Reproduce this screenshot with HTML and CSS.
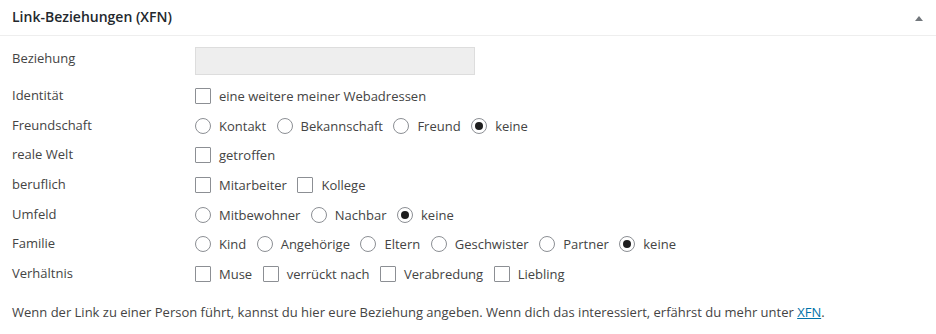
FILE: index.html
```html
<!DOCTYPE html>
<html lang="de">
<head>
<meta charset="utf-8">
<title>Link-Beziehungen (XFN)</title>
<link rel="stylesheet" href="styles.css">
</head>
<body>
<div class="postbox">
  <div class="hdr">
    <h2 class="title">Link-Beziehungen (XFN)</h2>
    <svg class="toggle" width="8" height="5" viewBox="0 0 8 5"><polygon points="4,0 8,5 0,5" fill="#72777c"/></svg>
  </div>
  <div class="inside">
    <div class="grid">
      <div class="lbl">Beziehung</div>
      <div class="val val-first"><input class="rel" type="text" readonly></div>

      <div class="lbl">Identität</div>
      <div class="val"><label class="opt"><input type="checkbox" class="cb"><span>eine weitere meiner Webadressen</span></label></div>

      <div class="lbl">Freundschaft</div>
      <div class="val">
        <label class="opt"><input type="radio" name="f" class="rb"><span>Kontakt</span></label>
        <label class="opt"><input type="radio" name="f" class="rb"><span>Bekannschaft</span></label>
        <label class="opt"><input type="radio" name="f" class="rb"><span>Freund</span></label>
        <label class="opt"><input type="radio" name="f" class="rb" checked><span>keine</span></label>
      </div>

      <div class="lbl">reale Welt</div>
      <div class="val"><label class="opt"><input type="checkbox" class="cb"><span>getroffen</span></label></div>

      <div class="lbl">beruflich</div>
      <div class="val">
        <label class="opt"><input type="checkbox" class="cb"><span>Mitarbeiter</span></label>
        <label class="opt"><input type="checkbox" class="cb"><span>Kollege</span></label>
      </div>

      <div class="lbl">Umfeld</div>
      <div class="val">
        <label class="opt"><input type="radio" name="u" class="rb"><span>Mitbewohner</span></label>
        <label class="opt"><input type="radio" name="u" class="rb"><span>Nachbar</span></label>
        <label class="opt"><input type="radio" name="u" class="rb" checked><span>keine</span></label>
      </div>

      <div class="lbl">Familie</div>
      <div class="val">
        <label class="opt"><input type="radio" name="fa" class="rb"><span>Kind</span></label>
        <label class="opt"><input type="radio" name="fa" class="rb"><span>Angehörige</span></label>
        <label class="opt"><input type="radio" name="fa" class="rb"><span>Eltern</span></label>
        <label class="opt"><input type="radio" name="fa" class="rb"><span>Geschwister</span></label>
        <label class="opt"><input type="radio" name="fa" class="rb"><span>Partner</span></label>
        <label class="opt"><input type="radio" name="fa" class="rb" checked><span>keine</span></label>
      </div>

      <div class="lbl">Verhältnis</div>
      <div class="val">
        <label class="opt"><input type="checkbox" class="cb"><span>Muse</span></label>
        <label class="opt"><input type="checkbox" class="cb"><span>verrückt nach</span></label>
        <label class="opt"><input type="checkbox" class="cb"><span>Verabredung</span></label>
        <label class="opt"><input type="checkbox" class="cb"><span>Liebling</span></label>
      </div>
    </div>
    <p class="note">Wenn der Link zu einer Person führt, kannst du hier eure Beziehung angeben. Wenn dich das interessiert, erfährst du mehr unter <a href="#">XFN</a>.</p>
  </div>
</div>
</body>
</html>
```
FILE: styles.css
```css
* { box-sizing: border-box; }
html, body { margin: 0; padding: 0; background: #fff; }
body {
  font-family: "Open Sans", "Noto Sans", sans-serif;
  font-size: 13px;
  line-height: 20px;
  color: #444;
}
.postbox { width: 936px; }
.hdr {
  height: 36px;
  border-bottom: 1px solid #eee;
  display: flex;
  justify-content: space-between;
  align-items: flex-start;
  padding: 7px 13px 0 12px;
}
.title {
  margin: 0;
  font-size: 14px;
  font-weight: 600;
  line-height: 19.6px;
  color: #23282d;
}
.toggle { margin-top: 9px; display: block; }
.inside { padding: 11px 12px 0 12px; }
.grid {
  display: grid;
  grid-template-columns: 183px 1fr;
  grid-template-rows: 37px repeat(7, 29.67px);
}
.lbl { line-height: 20px; padding-top: 1px; }
.val { display: flex; align-items: flex-start; padding-top: 2px; }
.val-first { padding-top: 0; }
.rel {
  width: 280px;
  height: 28px;
  margin: 0;
  background: #eee;
  border: 1px solid #ddd;
  outline: none;
  font: inherit;
}
.opt {
  display: flex;
  align-items: flex-start;
  margin-right: 10.5px;
}
.opt span { margin-left: 8px; line-height: 20px; }
.cb, .rb {
  -webkit-appearance: none;
  appearance: none;
  width: 16px;
  height: 16px;
  margin: 2px 0 0 0;
  border: 1px solid #8c8f94;
  background: #fff;
  flex: none;
  position: relative;
}
.cb { border-radius: 1px; }
.rb { border-radius: 50%; }
.rb:checked::before {
  content: "";
  position: absolute;
  left: 3px; top: 3px;
  width: 8px; height: 8px;
  border-radius: 50%;
  background: #1e1e1e;
}
.note { margin: 10px 0 0 0; }
.note a { color: #0073aa; text-decoration: underline; }
```
